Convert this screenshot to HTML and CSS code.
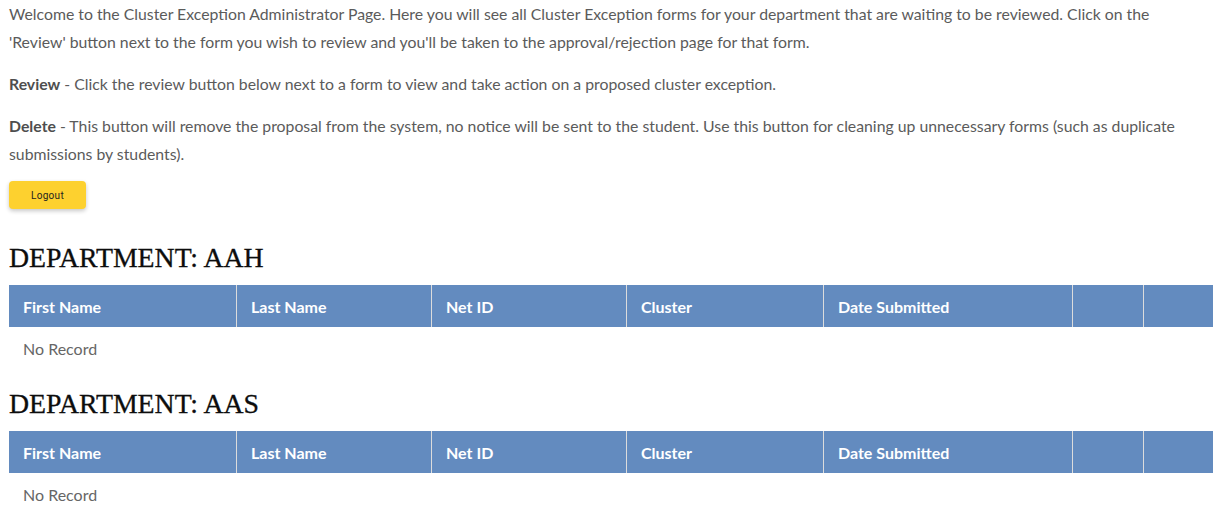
FILE: index.html
```html
<!DOCTYPE html>
<html lang="en">
<head>
<meta charset="utf-8">
<title>Cluster Exception Administrator</title>
<link rel="stylesheet" href="styles.css">
</head>
<body>
<main class="page">
  <p class="intro">Welcome to the Cluster Exception Administrator Page. Here you will see all Cluster Exception forms for your department that are waiting to be reviewed. Click on the 'Review' button next to the form you wish to review and you'll be taken to the approval/rejection page for that form.</p>
  <p class="intro"><strong>Review</strong> - Click the review button below next to a form to view and take action on a proposed cluster exception.</p>
  <p class="intro"><strong>Delete</strong> - This button will remove the proposal from the system, no notice will be sent to the student. Use this button for cleaning up unnecessary forms (such as duplicate submissions by students).</p>
  <button class="logout" type="button">Logout</button>

  <section class="dept">
    <h2 class="dept-title">DEPARTMENT: AAH</h2>
    <table class="forms">
      <colgroup>
        <col class="c-first"><col class="c-last"><col class="c-net"><col class="c-cluster"><col class="c-date"><col class="c-act1"><col class="c-act2">
      </colgroup>
      <thead>
        <tr><th>First Name</th><th>Last Name</th><th>Net ID</th><th>Cluster</th><th>Date Submitted</th><th></th><th></th></tr>
      </thead>
      <tbody>
        <tr><td colspan="7">No Record</td></tr>
      </tbody>
    </table>
  </section>

  <section class="dept">
    <h2 class="dept-title">DEPARTMENT: AAS</h2>
    <table class="forms">
      <colgroup>
        <col class="c-first"><col class="c-last"><col class="c-net"><col class="c-cluster"><col class="c-date"><col class="c-act1"><col class="c-act2">
      </colgroup>
      <thead>
        <tr><th>First Name</th><th>Last Name</th><th>Net ID</th><th>Cluster</th><th>Date Submitted</th><th></th><th></th></tr>
      </thead>
      <tbody>
        <tr><td colspan="7">No Record</td></tr>
      </tbody>
    </table>
  </section>
</main>
</body>
</html>
```

FILE: styles.css
```css
html, body {
  margin: 0;
  padding: 0;
  background: #ffffff;
}

.page {
  padding: 0 10px 0 9px;
  font-family: "Lato", "Liberation Sans", sans-serif;
  font-size: 15.8px;
  color: #5b5b5b;
}

.intro {
  max-width: 1180px;
  margin: 0 0 14px;
  line-height: 28px;
}

.intro strong {
  font-weight: 700;
  color: #4e4e4e;
}

.logout {
  display: block;
  margin: -1px 0 0;
  width: 77px;
  height: 28px;
  border: none;
  border-radius: 4px;
  background: #fdd12f;
  box-shadow: 0 2px 4px rgba(0, 0, 0, 0.22);
  font-family: "Roboto", "Liberation Sans", sans-serif;
  font-size: 10px;
  letter-spacing: 0.3px;
  color: #1e1e1e;
  padding: 0;
}

.dept-title {
  margin: 31px 0 9px;
  font-family: "Liberation Serif", "DejaVu Serif", serif;
  font-weight: 400;
  font-size: 27.8px;
  line-height: 36px;
  color: #0d0d0d;
  -webkit-text-stroke: 0.3px #0d0d0d;
}

.dept + .dept .dept-title {
  margin-top: 17px;
}

.forms {
  width: 1204px;
  table-layout: fixed;
  border-collapse: separate;
  border-spacing: 0;
}

.c-first { width: 227px; }
.c-last { width: 195px; }
.c-net { width: 195px; }
.c-cluster { width: 197px; }
.c-date { width: 249px; }
.c-act1 { width: 71px; }
.c-act2 { width: 70px; }

.forms th {
  height: 42px;
  padding: 0 14px;
  background: #638bbf;
  color: #ffffff;
  font-weight: 700;
  font-size: 16px;
  text-align: left;
  border-left: 1px solid #dcdcdc;
  box-sizing: border-box;
}

.forms th:first-child {
  border-left: none;
}

.forms td {
  height: 42px;
  padding: 0 14px;
  color: #666666;
  font-size: 16px;
  box-sizing: border-box;
}
```
